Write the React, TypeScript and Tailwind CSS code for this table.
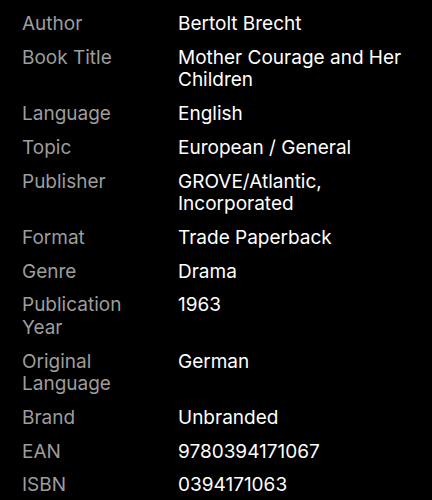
import React from "react";

const rows: [string, string][] = [
  ["Author", "Bertolt Brecht"],
  ["Book Title", "Mother Courage and Her Children"],
  ["Language", "English"],
  ["Topic", "European / General"],
  ["Publisher", "GROVE/Atlantic, Incorporated"],
  ["Format", "Trade Paperback"],
  ["Genre", "Drama"],
  ["Publication Year", "1963"],
  ["Original Language", "German"],
  ["Brand", "Unbranded"],
  ["EAN", "9780394171067"],
  ["ISBN", "0394171063"],
];

export default function App() {
  return (
    <div
      className="w-[432px] h-[500px] overflow-hidden bg-black pl-[22px] pr-[20px] pt-[13px]"
      style={{ fontFamily: "Inter, 'Noto Sans', sans-serif" }}
    >
      <div className="grid grid-cols-[156px_1fr] gap-y-[11.25px] text-[19px] leading-[22.5px]">
        {rows.map(([k, v]) => (
          <React.Fragment key={k}>
            <div className="text-[#9d9d9d] pr-4">{k}</div>
            <div className="text-white">{v}</div>
          </React.Fragment>
        ))}
      </div>
    </div>
  );
}
